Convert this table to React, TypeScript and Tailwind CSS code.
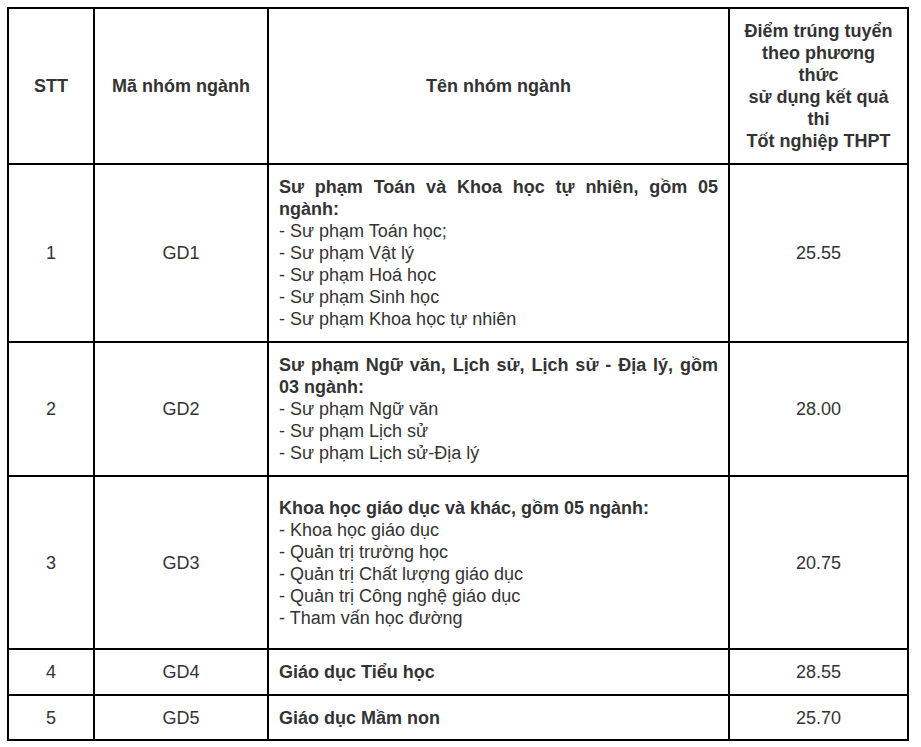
import React from "react";

const rows = [
  {
    stt: "1",
    ma: "GD1",
    title: "Sư phạm Toán và Khoa học tự nhiên, gồm 05 ngành:",
    items: ["Sư phạm Toán học;", "Sư phạm Vật lý", "Sư phạm Hoá học", "Sư phạm Sinh học", "Sư phạm Khoa học tự nhiên"],
    score: "25.55",
    h: "h-[178px]",
  },
  {
    stt: "2",
    ma: "GD2",
    title: "Sư phạm Ngữ văn, Lịch sử, Lịch sử - Địa lý, gồm 03 ngành:",
    items: ["Sư phạm Ngữ văn", "Sư phạm Lịch sử", "Sư phạm Lịch sử-Địa lý"],
    score: "28.00",
    h: "h-[134px]",
  },
  {
    stt: "3",
    ma: "GD3",
    title: "Khoa học giáo dục và khác, gồm 05 ngành:",
    items: ["Khoa học giáo dục", "Quản trị trường học", "Quản trị Chất lượng giáo dục", "Quản trị Công nghệ giáo dục", "Tham vấn học đường"],
    score: "20.75",
    h: "h-[173px]",
  },
  {
    stt: "4",
    ma: "GD4",
    title: "Giáo dục Tiểu học",
    items: [],
    score: "28.55",
    h: "h-[46px]",
  },
  {
    stt: "5",
    ma: "GD5",
    title: "Giáo dục Mầm non",
    items: [],
    score: "25.70",
    h: "h-[45px]",
  },
];

export default function App() {
  return (
    <div className="bg-white w-[921px] h-[747px] pt-[7px] pl-[7px] font-['Liberation_Sans',Arial,sans-serif] text-[18px] leading-[22px] text-[#333]">
      <table className="border-collapse border-2 border-black table-fixed w-[900px]">
        <colgroup>
          <col className="w-[86px]" />
          <col className="w-[174px]" />
          <col className="w-[461px]" />
          <col className="w-[179px]" />
        </colgroup>
        <thead>
          <tr className="h-[156px]">
            <th className="border-2 border-black font-bold text-center align-middle">STT</th>
            <th className="border-2 border-black font-bold text-center align-middle">Mã nhóm ngành</th>
            <th className="border-2 border-black font-bold text-center align-middle">Tên nhóm ngành</th>
            <th className="border-2 border-black font-bold text-center align-middle px-[10px]">
              Điểm trúng tuyển theo phương
              <br />
              thức
              <br />
              sử dụng kết quả
              <br />
              thi
              <br />
              Tốt nghiệp THPT
            </th>
          </tr>
        </thead>
        <tbody>
          {rows.map((r) => (
            <tr key={r.stt} className={r.h}>
              <td className="border-2 border-black text-center align-middle">{r.stt}</td>
              <td className="border-2 border-black text-center align-middle">{r.ma}</td>
              <td className="border-2 border-black align-middle pl-[10px] pr-[10px] text-justify">
                <div className="font-bold">{r.title}</div>
                {r.items.map((it) => (
                  <div key={it}>- {it}</div>
                ))}
              </td>
              <td className="border-2 border-black text-center align-middle">{r.score}</td>
            </tr>
          ))}
        </tbody>
      </table>
    </div>
  );
}
